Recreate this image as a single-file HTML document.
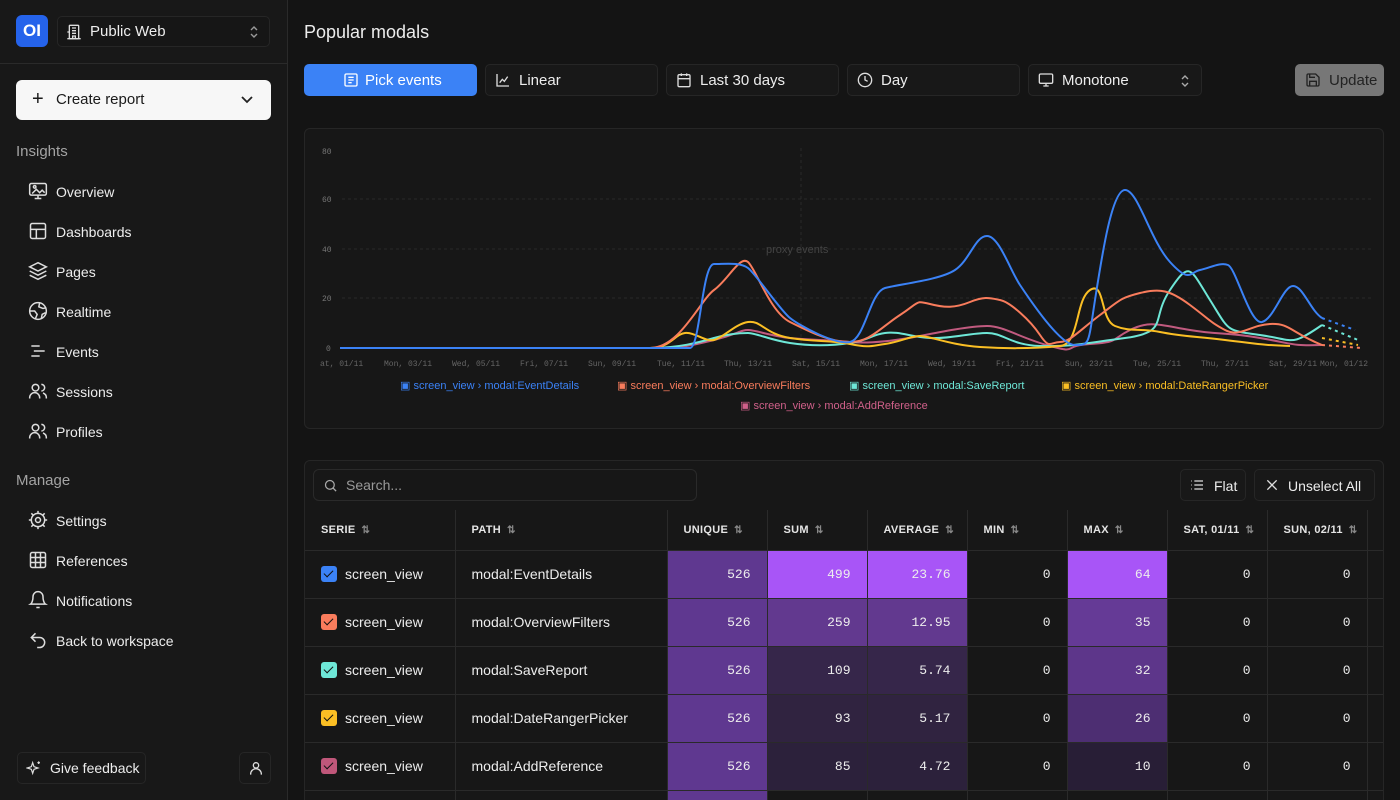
<!DOCTYPE html>
<html><head><meta charset="utf-8"><style>
*{box-sizing:border-box;margin:0;padding:0}
html,body{width:1400px;height:800px;overflow:hidden}
body{background:#141414;font-family:"Liberation Sans",sans-serif;color:#ededed;position:relative}
#w{position:absolute;left:0;top:0;width:1400px;height:800px;overflow:hidden}
.sb{position:absolute;left:0;top:0;width:288px;height:800px;background:#181818;border-right:1px solid #2a2a2a}
.logo{position:absolute;left:16px;top:15px;width:32px;height:32px;border-radius:6px;background:#2563eb;color:#fff;font-weight:bold;font-size:17px;text-align:center;line-height:32px}
.proj{position:absolute;left:57px;top:16px;width:213px;height:31px;border:1px solid #262626;border-radius:5px;background:#161616;font-size:15px;line-height:30px;padding-left:32px}
.hr{position:absolute;left:0;top:63px;width:287px;border-top:1px solid #2a2a2a}
.create{position:absolute;left:16px;top:80px;width:255px;height:40px;border-radius:6px;background:#f7f7f7;color:#1a1a1a;font-size:15px;line-height:40px;padding-left:40px}
.sec{position:absolute;left:16px;font-size:15px;color:#a3a3a3}
.nav{position:absolute;left:56px;font-size:14px;color:#ededed}
.ni{position:absolute;left:28px;width:20px;height:20px}
.btn{position:absolute;height:32px;border:1px solid #262626;border-radius:5px;background:#181818;font-size:15px;line-height:32px;padding-left:33px;white-space:nowrap}
.btn svg{position:absolute;left:9px;top:7px}
.card{position:absolute;border:1px solid #262626;border-radius:6px;background:#171717}
#tw{position:absolute;left:305px;top:510px;width:1078px;height:290px;overflow:hidden}
table{border-collapse:collapse;table-layout:fixed;font-size:14px;width:1082px}
td,th{border-right:1px solid #2a2a2a;border-bottom:1px solid #2a2a2a;height:48px;padding:0 16px;white-space:nowrap;overflow:hidden}
th{height:40px;font-size:11px;font-weight:bold;text-align:left;letter-spacing:.3px;color:#e5e5e5}
td.n{text-align:right;font-family:"Liberation Mono",monospace;font-size:13px}
.cb{display:inline-block;width:16px;height:16px;border-radius:3px;vertical-align:-3px;margin-right:8px;position:relative}
.cb:after{content:"";position:absolute;left:5px;top:2px;width:4px;height:8px;border:solid #111;border-width:0 1.5px 1.5px 0;transform:rotate(45deg)}
.ar{color:#888;font-size:10px;margin-left:6px}
</style></head><body><div id="w">
<div class="sb">
<div class="logo">OI</div>
<div class="proj"><svg style="position:absolute;left:8px;top:7px" width="16" height="16" viewBox="0 0 24 24" fill="none" stroke="#ddd" stroke-width="2"><rect x="5" y="2" width="14" height="20" rx="1"/><path d="M9 6h6M9 10h6M9 14h6M10 22v-4h4v4M2 12h3M2 22h20"/></svg>Public Web<svg style="position:absolute;right:10px;top:8px" width="10" height="14" viewBox="0 0 10 14" fill="none" stroke="#999" stroke-width="1.4"><path d="M2 5l3-3 3 3M2 9l3 3 3-3"/></svg></div>
<div class="hr"></div>
<div class="create"><span style="position:absolute;left:16px;font-size:20px;top:-1px">+</span>Create report<svg style="position:absolute;right:18px;top:15px" width="12" height="10" viewBox="0 0 12 8" fill="none" stroke="#222" stroke-width="1.8"><path d="M1 1l5 5 5-5"/></svg></div>
<div class="sec" style="top:143px">Insights</div>
<div class="nav" style="top:184px">Overview</div>
<div class="nav" style="top:224px">Dashboards</div>
<div class="nav" style="top:264px">Pages</div>
<div class="nav" style="top:304px">Realtime</div>
<div class="nav" style="top:344px">Events</div>
<div class="nav" style="top:384px">Sessions</div>
<div class="nav" style="top:424px">Profiles</div>
<div class="sec" style="top:472px">Manage</div>
<div class="nav" style="top:513px">Settings</div>
<div class="nav" style="top:553px">References</div>
<div class="nav" style="top:593px">Notifications</div>
<div class="nav" style="top:633px">Back to workspace</div>
<svg class="ni" style="top:181px" viewBox="0 0 24 24" fill="none" stroke="#ddd" stroke-width="1.8"><rect x="2" y="3" width="20" height="14" rx="2"/><path d="M8 21h8M12 17v4M5 15l5-5 4 4 3-3 3 3"/><circle cx="8" cy="7" r="1.5"/></svg>
<svg class="ni" style="top:221px" viewBox="0 0 24 24" fill="none" stroke="#ddd" stroke-width="1.8"><rect x="3" y="3" width="18" height="18" rx="2"/><path d="M3 10h18M10 10v11"/></svg>
<svg class="ni" style="top:261px" viewBox="0 0 24 24" fill="none" stroke="#ddd" stroke-width="1.8"><path d="M12 2l10 5-10 5L2 7zM2 12l10 5 10-5M2 17l10 5 10-5"/></svg>
<svg class="ni" style="top:301px" viewBox="0 0 24 24" fill="none" stroke="#ddd" stroke-width="1.8"><circle cx="12" cy="12" r="10"/><path d="M2 12h6l3 4-2 5M14 2l-1 5 5 2 4-1M16 21l1-5 4-2"/></svg>
<svg class="ni" style="top:341px" viewBox="0 0 24 24" fill="none" stroke="#ddd" stroke-width="1.8"><path d="M4 6h10M7 12h13M4 18h10"/></svg>
<svg class="ni" style="top:381px" viewBox="0 0 24 24" fill="none" stroke="#ddd" stroke-width="1.8"><circle cx="9" cy="8" r="4"/><path d="M2 21v-1a6 6 0 0 1 12 0v1M16 4a4 4 0 0 1 0 8M22 21v-1a6 6 0 0 0-4-5.6"/></svg>
<svg class="ni" style="top:421px" viewBox="0 0 24 24" fill="none" stroke="#ddd" stroke-width="1.8"><circle cx="9" cy="8" r="4"/><path d="M2 21v-1a6 6 0 0 1 12 0v1M16 4a4 4 0 0 1 0 8M22 21v-1a6 6 0 0 0-4-5.6"/></svg>
<svg class="ni" style="top:510px" viewBox="0 0 24 24" fill="none" stroke="#ddd" stroke-width="1.8"><circle cx="12" cy="12" r="3"/><circle cx="12" cy="12" r="8"/><path d="M12 1v3M12 20v3M1 12h3M20 12h3M4 4l2 2M18 18l2 2M4 20l2-2M18 6l2-2"/></svg>
<svg class="ni" style="top:550px" viewBox="0 0 24 24" fill="none" stroke="#ddd" stroke-width="1.8"><rect x="3" y="3" width="18" height="18" rx="2"/><path d="M3 9h18M3 15h18M9 3v18M15 3v18"/></svg>
<svg class="ni" style="top:590px" viewBox="0 0 24 24" fill="none" stroke="#ddd" stroke-width="1.8"><path d="M6 8a6 6 0 0 1 12 0c0 7 3 9 3 9H3s3-2 3-9M10 21h4"/></svg>
<svg class="ni" style="top:630px" viewBox="0 0 24 24" fill="none" stroke="#ddd" stroke-width="1.8"><path d="M9 14L4 9l5-5M4 9h10a6 6 0 0 1 0 12h-3"/></svg>
<div style="position:absolute;left:17px;top:752px;width:129px;height:32px;border:1px solid #262626;border-radius:5px;font-size:14px;line-height:31px;padding-left:32px">Give feedback<svg style="position:absolute;left:8px;top:7px" width="16" height="16" viewBox="0 0 24 24" fill="none" stroke="#ddd" stroke-width="1.8"><path d="M10 4l2 6 6 2-6 2-2 6-2-6-6-2 6-2zM19 2v4M17 4h4"/></svg></div>
<div style="position:absolute;left:239px;top:752px;width:32px;height:32px;border:1px solid #262626;border-radius:5px"><svg style="position:absolute;left:8px;top:7px" width="16" height="16" viewBox="0 0 24 24" fill="none" stroke="#ddd" stroke-width="2"><circle cx="12" cy="8" r="4"/><path d="M4 22v-1a7 7 0 0 1 16 0v1"/></svg></div>
</div>

<div style="position:absolute;left:304px;top:22px;font-size:18px">Popular modals</div>
<div class="btn" style="left:304px;top:64px;width:173px;background:#3b82f6;border-color:#3b82f6;color:#fff;padding-left:60px"><svg style="left:38px" width="16" height="16" viewBox="0 0 24 24" fill="none" stroke="#fff" stroke-width="2"><rect x="3" y="3" width="18" height="18" rx="2"/><path d="M8 8h8M8 12h8M8 16h5"/></svg>Pick events</div>
<div class="btn" style="left:485px;top:64px;width:173px"><svg width="16" height="16" viewBox="0 0 24 24" fill="none" stroke="#ddd" stroke-width="2"><path d="M3 3v18h18M7 16l4-5 3 3 5-7"/></svg>Linear</div>
<div class="btn" style="left:666px;top:64px;width:173px"><svg width="16" height="16" viewBox="0 0 24 24" fill="none" stroke="#ddd" stroke-width="2"><rect x="3" y="4" width="18" height="18" rx="2"/><path d="M3 10h18M8 2v4M16 2v4"/></svg>Last 30 days</div>
<div class="btn" style="left:847px;top:64px;width:173px"><svg width="16" height="16" viewBox="0 0 24 24" fill="none" stroke="#ddd" stroke-width="2"><circle cx="12" cy="12" r="10"/><path d="M12 6v6l4 2"/></svg>Day</div>
<div class="btn" style="left:1028px;top:64px;width:174px"><svg width="16" height="16" viewBox="0 0 24 24" fill="none" stroke="#ddd" stroke-width="2"><rect x="2" y="3" width="20" height="14" rx="2"/><path d="M8 21h8M12 17v4"/></svg>Monotone<svg style="left:auto;right:11px;top:9px" width="10" height="14" viewBox="0 0 10 14" fill="none" stroke="#aaa" stroke-width="1.4"><path d="M2 5l3-3 3 3M2 9l3 3 3-3"/></svg></div>
<div class="btn" style="left:1295px;top:64px;width:89px;background:#777;border-color:#777;color:#222"><svg width="16" height="16" viewBox="0 0 24 24" fill="none" stroke="#222" stroke-width="2"><path d="M5 3h11l5 5v11a2 2 0 0 1-2 2H5a2 2 0 0 1-2-2V5a2 2 0 0 1 2-2zM7 3v5h8M7 21v-7h10v7"/></svg>Update</div>

<div class="card" style="left:304px;top:128px;width:1080px;height:301px"></div>
<svg style="position:absolute;left:304px;top:128px" width="1080" height="301" font-family="Liberation Mono,monospace" font-size="8" fill="#777">
<g stroke="#2a2a2a" stroke-dasharray="3 3"><line x1="38" x2="1070" y1="71" y2="71"/><line x1="38" x2="1070" y1="121" y2="121"/><line x1="38" x2="1070" y1="170" y2="170"/><line x1="497" x2="497" y1="20" y2="220"/></g>
<text x="18" y="26">80</text><text x="18" y="74">60</text><text x="18" y="124">40</text><text x="18" y="173">20</text><text x="22" y="223">0</text>
<text x="462" y="125" font-family="Liberation Sans" font-size="11" fill="#444">proxy events</text>
<g font-size="8" fill="#666"><text x="16" y="238">at, 01/11</text><text x="80" y="238">Mon, 03/11</text><text x="148" y="238">Wed, 05/11</text><text x="216" y="238">Fri, 07/11</text><text x="284" y="238">Sun, 09/11</text><text x="353" y="238">Tue, 11/11</text><text x="420" y="238">Thu, 13/11</text><text x="488" y="238">Sat, 15/11</text><text x="556" y="238">Mon, 17/11</text><text x="624" y="238">Wed, 19/11</text><text x="692" y="238">Fri, 21/11</text><text x="761" y="238">Sun, 23/11</text><text x="829" y="238">Tue, 25/11</text><text x="897" y="238">Thu, 27/11</text><text x="965" y="238">Sat, 29/11</text><text x="1016" y="238">Mon, 01/12</text></g>
<g fill="none" stroke-width="2" transform="translate(-304,-128)">
<path stroke="#ec6b9a" stroke-opacity=".8" d="M340 348H650C680 348 690 346 714 340S740 330 748 330 770 336 790 338 830 340 850 342 900 340 920 336 970 326 987 326 1020 338 1050 346 1060 346 1090 344 1110 340 1130 330 1160 325 1190 330 1225 332 1260 338 1290 346 1322 345"/>
<path stroke="#6ee7d7" d="M340 348H650C680 348 700 342 714 338S740 333 748 333 770 340 790 343 830 346 850 343 870 335 885 333 910 337 930 338 970 333 987 333 1010 345 1040 346 1080 344 1125 338 1150 320 1170 290 1190 268 1210 300 1225 330 1260 335 1290 347 1322 325"/>
<path stroke="#fbbf24" d="M340 348H650C670 348 675 334 685 333S705 342 714 340 735 324 748 322 765 334 790 338 830 340 850 344 870 346 885 344 910 336 920 336 950 345 980 347 1040 348 1060 346 1075 300 1090 290 1100 320 1115 326 1140 328 1160 332 1190 336 1225 340 1260 345 1290 346 1322 338"/>
<path stroke="#f97c5c" d="M340 348H650C680 348 700 300 714 290S740 255 748 262 770 312 790 322 830 342 850 342 880 328 900 315 915 300 930 304 955 308 970 302 990 298 1000 300 1030 320 1040 335 1050 342 1060 342 1080 330 1100 315 1120 298 1140 293 1170 290 1190 305 1210 322 1225 330 1250 325 1270 324 1290 332 1322 345"/>
<path stroke="#3b82f6" d="M340 348H690C700 348 702 264 714 264S740 262 748 268S780 310 790 318S835 345 850 342S870 292 885 288S940 280 955 270S975 236 987 236S1010 270 1020 285S1060 345 1075 345S1088 345 1095 300S1112 190 1125 190S1150 240 1170 262S1190 272 1200 270S1220 262 1228 265S1250 325 1262 322S1283 286 1293 286S1310 310 1322 318"/>
<path stroke="#3b82f6" stroke-dasharray="3 4" d="M1322 318 1355 330"/><path stroke="#6ee7d7" stroke-dasharray="3 4" d="M1322 325 1358 340"/><path stroke="#fbbf24" stroke-dasharray="3 4" d="M1322 338 1358 345"/><path stroke="#f97c5c" stroke-dasharray="3 4" d="M1322 345 1362 348"/>
</g>
<g font-family="Liberation Sans" font-size="11" xml:space="preserve">
<text x="96" y="261" fill="#3b82f6">▣  screen_view   ›   modal:EventDetails</text>
<text x="313" y="261" fill="#f97c5c">▣  screen_view   ›   modal:OverviewFilters</text>
<text x="545" y="261" fill="#6ee7d7">▣  screen_view   ›   modal:SaveReport</text>
<text x="757" y="261" fill="#fbbf24">▣  screen_view   ›   modal:DateRangerPicker</text>
<text x="436" y="281" fill="#d0608a">▣  screen_view   ›   modal:AddReference</text>
</g>
</svg>

<div class="card" style="left:304px;top:460px;width:1080px;height:360px"></div>
<div style="position:absolute;left:313px;top:469px;width:384px;height:32px;border:1px solid #2a2a2a;border-radius:6px;font-size:14px;line-height:31px;padding-left:32px;color:#999">Search...<svg style="position:absolute;left:9px;top:8px" width="15" height="15" viewBox="0 0 24 24" fill="none" stroke="#aaa" stroke-width="2"><circle cx="11" cy="11" r="7"/><path d="M21 21l-5-5"/></svg></div>
<div class="btn" style="left:1180px;top:469px;width:66px;font-size:14px">Flat<svg width="16" height="16" viewBox="0 0 24 24" fill="none" stroke="#ddd" stroke-width="2" style="left:8px"><path d="M8 6h13M8 12h13M8 18h13M3 6h1M3 12h1M3 18h1"/></svg></div>
<div class="btn" style="left:1254px;top:469px;width:121px;font-size:14px">Unselect All<svg width="16" height="16" viewBox="0 0 24 24" fill="none" stroke="#ddd" stroke-width="2"><path d="M5 5l14 14M19 5L5 19"/></svg></div>
<div id="tw"><table>
<colgroup><col style="width:150px"><col style="width:212px"><col style="width:100px"><col style="width:100px"><col style="width:100px"><col style="width:100px"><col style="width:100px"><col style="width:100px"><col style="width:100px"><col style="width:20px"></colgroup>
<tr><th>SERIE<span class="ar">⇅</span></th><th>PATH<span class="ar">⇅</span></th><th>UNIQUE<span class="ar">⇅</span></th><th>SUM<span class="ar">⇅</span></th><th>AVERAGE<span class="ar">⇅</span></th><th>MIN<span class="ar">⇅</span></th><th>MAX<span class="ar">⇅</span></th><th>SAT, 01/11<span class="ar">⇅</span></th><th>SUN, 02/11<span class="ar">⇅</span></th><th></th></tr>
<tr><td><span class="cb" style="background:#3b82f6"></span>screen_view</td><td>modal:EventDetails</td><td class="n" style="background:#5f3890">526</td><td class="n" style="background:#a855f7">499</td><td class="n" style="background:#a855f7">23.76</td><td class="n">0</td><td class="n" style="background:#a855f7">64</td><td class="n">0</td><td class="n">0</td><td></td></tr>
<tr><td><span class="cb" style="background:#f97c5c"></span>screen_view</td><td>modal:OverviewFilters</td><td class="n" style="background:#5f3890">526</td><td class="n" style="background:#62398f">259</td><td class="n" style="background:#62398f">12.95</td><td class="n">0</td><td class="n" style="background:#653a96">35</td><td class="n">0</td><td class="n">0</td><td></td></tr>
<tr><td><span class="cb" style="background:#6ee7d7"></span>screen_view</td><td>modal:SaveReport</td><td class="n" style="background:#5f3890">526</td><td class="n" style="background:#36264a">109</td><td class="n" style="background:#36264a">5.74</td><td class="n">0</td><td class="n" style="background:#5d368a">32</td><td class="n">0</td><td class="n">0</td><td></td></tr>
<tr><td><span class="cb" style="background:#fbbf24"></span>screen_view</td><td>modal:DateRangerPicker</td><td class="n" style="background:#5f3890">526</td><td class="n" style="background:#302340">93</td><td class="n" style="background:#302340">5.17</td><td class="n">0</td><td class="n" style="background:#4d2e72">26</td><td class="n">0</td><td class="n">0</td><td></td></tr>
<tr><td><span class="cb" style="background:#c0577a"></span>screen_view</td><td>modal:AddReference</td><td class="n" style="background:#5f3890">526</td><td class="n" style="background:#2c213b">85</td><td class="n" style="background:#2c213b">4.72</td><td class="n">0</td><td class="n" style="background:#281e36">10</td><td class="n">0</td><td class="n">0</td><td></td></tr>
<tr><td></td><td></td><td class="n" style="background:#5f3890"></td><td></td><td></td><td></td><td></td><td></td><td></td><td></td></tr>
</table></div>
</div></body></html>
